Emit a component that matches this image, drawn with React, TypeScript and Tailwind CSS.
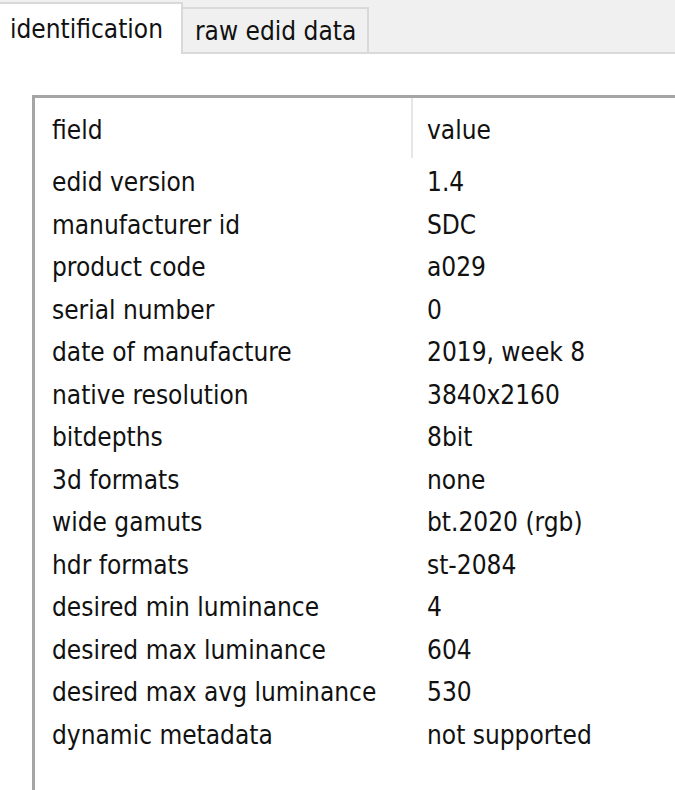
import React from "react";

const rows: [string, string][] = [
  ["edid version", "1.4"],
  ["manufacturer id", "SDC"],
  ["product code", "a029"],
  ["serial number", "0"],
  ["date of manufacture", "2019, week 8"],
  ["native resolution", "3840x2160"],
  ["bitdepths", "8bit"],
  ["3d formats", "none"],
  ["wide gamuts", "bt.2020 (rgb)"],
  ["hdr formats", "st-2084"],
  ["desired min luminance", "4"],
  ["desired max luminance", "604"],
  ["desired max avg luminance", "530"],
  ["dynamic metadata", "not supported"],
];

export default function App() {
  return (
    <div
      className="w-[675px] h-[790px] overflow-hidden whitespace-nowrap bg-white text-[#111] text-[26px] leading-none"
      style={{ fontFamily: '"DejaVu Sans Condensed", "DejaVu Sans", sans-serif' }}
    >
      {/* tab strip */}
      <div className="flex items-end h-[54px] bg-[#f0f0f0] border-b-2 border-[#dadada]">
        <div className="relative -mb-[2px] flex h-[52px] w-[183px] items-center border-t-2 border-r-2 border-[#d9d9d9] bg-white pl-[10px] pb-[1px]">
          identification
        </div>
        <div className="flex h-[45px] w-[186px] items-center border-t-2 border-r-2 border-[#d9d9d9] bg-[#f0f0f0] pl-[12px] pt-[1px]">
          raw edid data
        </div>
      </div>

      {/* list view */}
      <div className="ml-[32px] mt-[41px] h-[720px] w-[660px] border-[3px] border-[#a5a5a5] bg-white">
        <div className="flex h-[63px] items-center">
          <div className="w-[376px] pl-[17px]">field</div>
          <div className="h-[60px] w-[2px] self-start bg-[#e6e6e6]" />
          <div className="pl-[14px]">value</div>
        </div>
        {rows.map(([k, v]) => (
          <div key={k} className="flex h-[42.5px] items-center">
            <div className="w-[378px] pl-[17px]">{k}</div>
            <div className="pl-[14px]">{v}</div>
          </div>
        ))}
      </div>
    </div>
  );
}
